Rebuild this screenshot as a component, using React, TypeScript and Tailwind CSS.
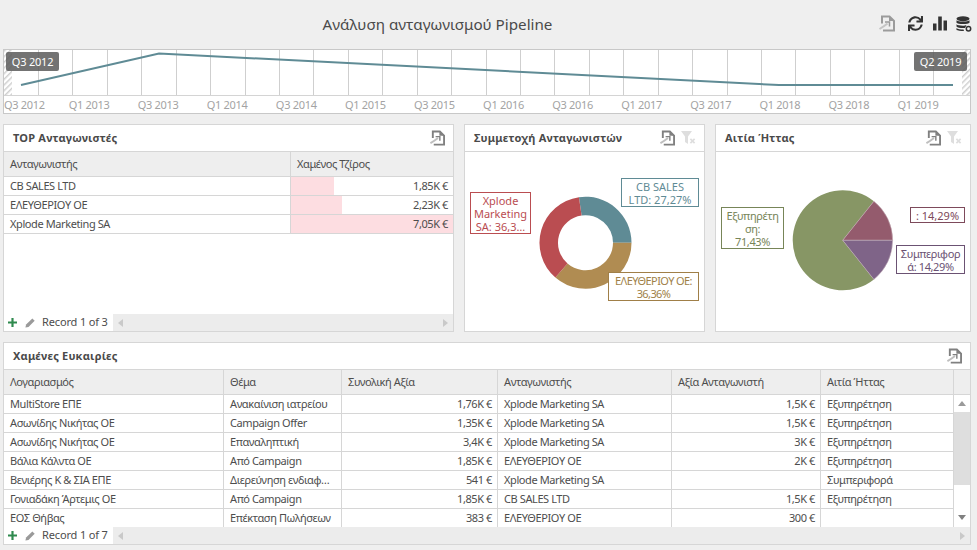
import React from 'react';
import { FaSync } from 'react-icons/fa';

const topRows = [
  { name: 'CB SALES LTD', label: '1,85K €', value: 1.85 },
  { name: 'ΕΛΕΥΘΕΡΙΟΥ ΟΕ', label: '2,23K €', value: 2.23 },
  { name: 'Xplode Marketing SA', label: '7,05K €', value: 7.05 },
];

const lostColumns = ['Λογαριασμός', 'Θέμα', 'Συνολική Αξία', 'Ανταγωνιστής', 'Αξία Ανταγωνιστή', 'Αιτία Ήττας'];

const lostRows = [
  ['MultiStore ΕΠΕ', 'Ανακαίνιση ιατρείου', '1,76K €', 'Xplode Marketing SA', '1,5K €', 'Εξυπηρέτηση'],
  ['Ασωνίδης Νικήτας ΟΕ', 'Campaign Offer', '1,35K €', 'Xplode Marketing SA', '1,5K €', 'Εξυπηρέτηση'],
  ['Ασωνίδης Νικήτας ΟΕ', 'Επαναληπτική', '3,4K €', 'Xplode Marketing SA', '3K €', 'Εξυπηρέτηση'],
  ['Βάλια Κάλντα ΟΕ', 'Από Campaign', '1,85K €', 'ΕΛΕΥΘΕΡΙΟΥ ΟΕ', '2K €', 'Εξυπηρέτηση'],
  ['Βενιέρης Κ & ΣΙΑ ΕΠΕ', 'Διερεύνηση ενδιαφ…', '541 €', 'Xplode Marketing SA', '', 'Συμπεριφορά'],
  ['Γονιαδάκη Άρτεμις ΟΕ', 'Από Campaign', '1,85K €', 'CB SALES LTD', '1,5K €', 'Εξυπηρέτηση'],
  ['ΕΟΣ Θήβας', 'Επέκταση Πωλήσεων', '383 €', 'ΕΛΕΥΘΕΡΙΟΥ ΟΕ', '300 €', ''],
];

const axisLabels = [
  'Q3 2012', 'Q1 2013', 'Q3 2013', 'Q1 2014', 'Q3 2014', 'Q1 2015', 'Q3 2015',
  'Q1 2016', 'Q3 2016', 'Q1 2017', 'Q3 2017', 'Q1 2018', 'Q3 2018', 'Q1 2019',
];

// start/end in degrees, 0 = 12 o'clock
function slicePath(cx: number, cy: number, r: number, inner: number, start: number, end: number) {
  const pt = (rad: number, a: number) => {
    const t = ((a - 90) * Math.PI) / 180;
    return `${(cx + rad * Math.cos(t)).toFixed(2)} ${(cy + rad * Math.sin(t)).toFixed(2)}`;
  };
  const large = end - start > 180 ? 1 : 0;
  if (inner === 0) return `M${cx} ${cy}L${pt(r, start)}A${r} ${r} 0 ${large} 1 ${pt(r, end)}Z`;
  return `M${pt(r, start)}A${r} ${r} 0 ${large} 1 ${pt(r, end)}L${pt(inner, end)}A${inner} ${inner} 0 ${large} 0 ${pt(inner, start)}Z`;
}

function ExportIcon({ className }: { className?: string }) {
  return (
    <svg viewBox="0 0 16 17" className={className} fill="none">
      <path d="M3 8.500V1.500H10.500L15 6V15.500H4" stroke="currentColor" strokeWidth="2" />
      <path d="M10 1v5h5.500z" fill="currentColor" />
      <path d="M.5 14C3 12.500 5.500 11 8.500 8.500" stroke="currentColor" strokeWidth="2" opacity=".5" />
      <path d="M6 7h4.500v4.500" stroke="currentColor" strokeWidth="1.500" />
    </svg>
  );
}

function ClearFilterIcon() {
  return (
    <svg viewBox="0 0 16 16" className="w-[16px] h-[16px] text-[#dedede]" fill="currentColor">
      <path d="M1 1h11L8 6.500V14L5 12V6.500z" />
      <path d="M9.800 9.500l1.200-1.200 1.500 1.500L14 8.300l1.200 1.200-1.500 1.500 1.500 1.500-1.200 1.200-1.500-1.500L11 13.700l-1.200-1.200 1.500-1.500z" />
    </svg>
  );
}

function PanelHeader({ title, filter }: { title: string; filter?: boolean }) {
  return (
    <div className="flex items-center justify-between h-[27px] pl-[9px] pr-[8px] border-b border-[#d6d6d6] shrink-0">
      <span className="text-[11px] font-bold text-[#4a4a4a] tracking-[0.2px]">{title}</span>
      <div className="flex items-center gap-[5px]">
        <ExportIcon className="w-[15px] h-[16px] text-[#808080]" />
        {filter && <ClearFilterIcon />}
      </div>
    </div>
  );
}

function GridFooter({ record }: { record: string }) {
  return (
    <div className="flex h-[17px] shrink-0 items-center">
      <div className="flex items-center w-[109px] h-full bg-white pl-[4px]">
        <svg viewBox="0 0 10 10" className="w-[9px] h-[9px] text-[#2f8a4e]" fill="currentColor">
          <path d="M3.800 0h2.400v3.800H10v2.400H6.200V10H3.800V6.200H0V3.800h3.800z" />
        </svg>
        <svg viewBox="0 0 12 12" className="w-[10px] h-[10px] ml-[8px] text-[#9a9a9a]" fill="currentColor">
          <path d="M8.800 .5l2.800 2.800L4.200 10.700 .5 11.500l.8-3.700z" />
        </svg>
        <span className="ml-[7px] text-[11px] tracking-[-0.15px] text-[#4d4d4d] whitespace-nowrap">{record}</span>
      </div>
      <div className="flex-1 h-full bg-[#ececec] flex items-center justify-between px-[5px]">
        <span className="w-0 h-0 border-y-[4px] border-y-transparent border-r-[5px] border-r-[#c9c9c9]" />
        <span className="w-0 h-0 border-y-[4px] border-y-transparent border-l-[5px] border-l-[#c9c9c9]" />
      </div>
    </div>
  );
}

function ChartLabel({ className, lines }: { className: string; lines: string[] }) {
  return (
    <div className={`absolute flex flex-col items-center justify-center text-center bg-white border text-[11px] whitespace-nowrap ${className}`}>
      {lines.map((line) => (
        <span key={line} className="block h-[13px] leading-[13px]">{line}</span>
      ))}
    </div>
  );
}

function Timeline() {
  const ticks = Array.from({ length: 27 }, (_, i) => Math.round(34 + i * 34.43) + 0.5);
  return (
    <div className="relative h-[65px] bg-white border border-[#c8c8c8] overflow-hidden">
      <svg width="966" height="45" className="block">
        <defs>
          <pattern id="hatch" width="4" height="4" patternUnits="userSpaceOnUse" patternTransform="rotate(-45)">
            <rect width="4" height="4" fill="#fff" />
            <rect width="4" height="1.500" fill="#cfcfcf" />
          </pattern>
        </defs>
        {ticks.map((x) => (
          <line key={x} x1={x} x2={x} y1="0" y2="45" stroke="#cfcfcf" />
        ))}
        <rect x="0" y="0" width="8" height="45" fill="url(#hatch)" />
        <rect x="958" y="0" width="8" height="45" fill="url(#hatch)" />
        <polyline points="17,35 155,3.500 775,35 949,35" fill="none" stroke="#5f8b95" strokeWidth="2" />
      </svg>
      <div className="flex h-[18px] border-t border-[#d4d4d4] text-[11px] tracking-[-0.3px] text-[#a3a3a3]">
        {axisLabels.map((label, i) => (
          <span
            key={label}
            className={`shrink-0 leading-[17px] whitespace-nowrap ${i === 0 ? 'w-[50.5px] text-left' : 'w-[69.08px] text-center'}`}
          >
            {label}
          </span>
        ))}
      </div>
      <div className="absolute left-[2px] top-[2px] w-[53px] h-[19px] rounded-[2px] bg-[#5a5a5a]/85 text-white text-[11px] tracking-[-0.2px] leading-[19px] text-center">Q3 2012</div>
      <div className="absolute right-[3px] top-[2px] w-[53px] h-[19px] rounded-[2px] bg-[#5a5a5a]/85 text-white text-[11px] tracking-[-0.2px] leading-[19px] text-center">Q2 2019</div>
    </div>
  );
}

function TopCompetitors() {
  const max = Math.max(...topRows.map((r) => r.value));
  return (
    <div className="w-[451px] flex flex-col bg-white border border-[#d6d6d6]">
      <PanelHeader title="TOP Ανταγωνιστές" />
      <div className="grid grid-cols-[287px_1fr] h-[25px] shrink-0 bg-[#eeeeee] border-b border-[#d6d6d6] text-[11px] tracking-[-0.4px] text-[#4d4d4d]">
        <div className="pl-[6px] leading-[24px] border-r border-[#d6d6d6]">Ανταγωνιστής</div>
        <div className="pl-[6px] leading-[24px]">Χαμένος Τζίρος</div>
      </div>
      <div className="flex-1">
        {topRows.map((row) => (
          <div key={row.name} className="grid grid-cols-[287px_1fr] h-[19px] border-b border-[#d6d6d6] text-[11px] tracking-[-0.4px] text-[#4d4d4d]">
            <div className="pl-[6px] leading-[18px] border-r border-[#d6d6d6]">{row.name}</div>
            <div className="relative text-right pr-[5px] leading-[18px]">
              <div className="absolute inset-y-0 left-0 bg-[#fddde1]" style={{ width: `${(row.value / max) * 100}%` }} />
              <span className="relative">{row.label}</span>
            </div>
          </div>
        ))}
      </div>
      <GridFooter record="Record 1 of 3" />
    </div>
  );
}

function ShareChart() {
  return (
    <div className="w-[241px] flex flex-col bg-white border border-[#d6d6d6]">
      <PanelHeader title="Συμμετοχή Ανταγωνιστών" filter />
      <div className="relative flex-1">
        <svg width="239" height="179" className="block">
          <path d={slicePath(120.5, 90.7, 46, 27.5, -8.2, 90)} fill="#5f8b95" />
          <path d={slicePath(120.5, 90.7, 46, 27.5, 90, 220.9)} fill="#b08c52" />
          <path d={slicePath(120.5, 90.7, 46, 27.5, 220.9, 351.8)} fill="#ba4d51" />
        </svg>
        <ChartLabel className="left-[156px] top-[26px] w-[78px] h-[29px] border-[#5f8b95] text-[#5f8b95]" lines={['CB SALES', 'LTD: 27,27%']} />
        <ChartLabel className="left-[5px] top-[40px] w-[61px] h-[42px] border-[#ba4d51] text-[#ba4d51]" lines={['Xplode', 'Marketing', 'SA: 36,3…']} />
        <ChartLabel className="left-[143px] top-[120px] w-[91px] h-[29px] border-[#a07f48] text-[#a07f48] tracking-[-0.6px]" lines={['ΕΛΕΥΘΕΡΙΟΥ ΟΕ:', '36,36%']} />
      </div>
    </div>
  );
}

function LossReasonChart() {
  return (
    <div className="w-[256px] flex flex-col bg-white border border-[#d6d6d6]">
      <PanelHeader title="Αιτία Ήττας" filter />
      <div className="relative flex-1">
        <svg width="254" height="179" className="block">
          <path d={slicePath(126.7, 88.3, 50, 0, 90 + 51.4, 90 - 51.4 + 360)} fill="#879665" />
          <path d={slicePath(126.7, 88.3, 50, 0, 90 - 51.4, 90)} fill="#945b6d" stroke="#c9b5bc" strokeWidth="0.5" />
          <path d={slicePath(126.7, 88.3, 50, 0, 90, 90 + 51.4)} fill="#7f6488" stroke="#c9b5bc" strokeWidth="0.5" />
        </svg>
        <ChartLabel className="left-[5px] top-[55px] w-[63px] h-[42px] border-[#778558] text-[#778558] tracking-[-0.4px]" lines={['Εξυπηρέτη', 'ση:', '71,43%']} />
        <ChartLabel className="left-[194px] top-[55px] w-[55px] h-[16px] border-[#7d4a5b] text-[#7d4a5b]" lines={[': 14,29%']} />
        <ChartLabel className="left-[180px] top-[93px] w-[69px] h-[29px] border-[#6b5273] text-[#6b5273] tracking-[-0.4px]" lines={['Συμπεριφορ', 'ά: 14,29%']} />
      </div>
    </div>
  );
}

const lostGrid = 'grid grid-cols-[220px_118px_156px_174px_149px_133px]';

function LostOpportunities() {
  return (
    <div className="h-[203px] flex flex-col bg-white border border-[#d6d6d6]">
      <PanelHeader title="Χαμένες Ευκαιρίες" />
      <div className="flex h-[25px] shrink-0 bg-[#eeeeee] border-b border-[#d6d6d6] text-[11px] tracking-[-0.4px] text-[#4d4d4d]">
        <div className={`${lostGrid} w-[950px]`}>
          {lostColumns.map((col) => (
            <div key={col} className="pl-[6px] leading-[24px] border-r border-[#d6d6d6]">{col}</div>
          ))}
        </div>
      </div>
      <div className="flex flex-1 min-h-0 overflow-hidden">
        <div className="w-[950px] shrink-0">
          {lostRows.map((row) => (
            <div key={row[0] + row[1]} className={`${lostGrid} h-[19px] border-b border-[#d6d6d6] text-[11px] tracking-[-0.4px] text-[#4d4d4d]`}>
              {row.map((cell, i) => (
                <div
                  key={i}
                  className={`leading-[18px] border-r border-[#d6d6d6] whitespace-nowrap ${i === 2 || i === 4 ? 'text-right pr-[5px]' : 'pl-[6px]'}`}
                >
                  {cell}
                </div>
              ))}
            </div>
          ))}
        </div>
        <div className="flex-1 flex flex-col">
          <div className="h-[17px] flex items-center justify-center">
            <span className="w-0 h-0 border-x-[4px] border-x-transparent border-b-[5px] border-b-[#9a9a9a]" />
          </div>
          <div className="h-[73px] bg-[#dedede]" />
          <div className="flex-1 flex items-end justify-center pb-[7px]">
            <span className="w-0 h-0 border-x-[4px] border-x-transparent border-t-[5px] border-t-[#808080]" />
          </div>
        </div>
      </div>
      <GridFooter record="Record 1 of 7" />
    </div>
  );
}

export default function App() {
  return (
    <div className="w-[977px] h-[550px] overflow-hidden bg-[#efefef] pl-[3px] pr-[6px] font-['Liberation_Sans',sans-serif]">
      <div className="relative flex items-center justify-center h-[49px]">
        <span className="text-[15.2px] text-[#4a4a4a] -ml-[99px] -mt-[1px]">Ανάλυση ανταγωνισμού Pipeline</span>
        <div className="absolute right-[-1px] top-[15px] flex items-center">
          <ExportIcon className="w-[16px] h-[17px] text-[#9b9b9b] mr-[13px]" />
          <FaSync className="w-[15px] h-[15px] text-[#333] mr-[10px]" />
          <svg viewBox="0 0 14 14" className="w-[14px] h-[15px] text-[#333] mr-[9px]" fill="currentColor">
            <path d="M0 7h3.500v7H0zM5.200 0h3.600v14H5.200zM10.500 4H14v10h-3.500z" />
          </svg>
          <svg viewBox="0 0 16 16" className="w-[16px] h-[16px] text-[#333]" fill="currentColor">
            <ellipse cx="7" cy="2.800" rx="6.500" ry="2.500" />
            <path d="M.5 4.300C1.500 6 12.500 6 13.500 4.300V6.800C12.500 8.500 1.500 8.500 .5 6.800zM.5 8.300C1.500 10 9 10 10.500 9.300L9 12H7C4 12 1.500 11.500 .5 10.500zM.5 12c1 1.200 4 1.500 7 1.500l.5 1.500C4.500 15 1.500 14.500 .5 14z" />
            <circle cx="12.500" cy="12.800" r="2.200" fill="none" stroke="currentColor" strokeWidth="1.500" />
          </svg>
        </div>
      </div>
      <Timeline />
      <div className="flex h-[208px] mt-[10px] gap-[10px]">
        <TopCompetitors />
        <ShareChart />
        <LossReasonChart />
      </div>
      <div className="mt-[10px]">
        <LostOpportunities />
      </div>
    </div>
  );
}
